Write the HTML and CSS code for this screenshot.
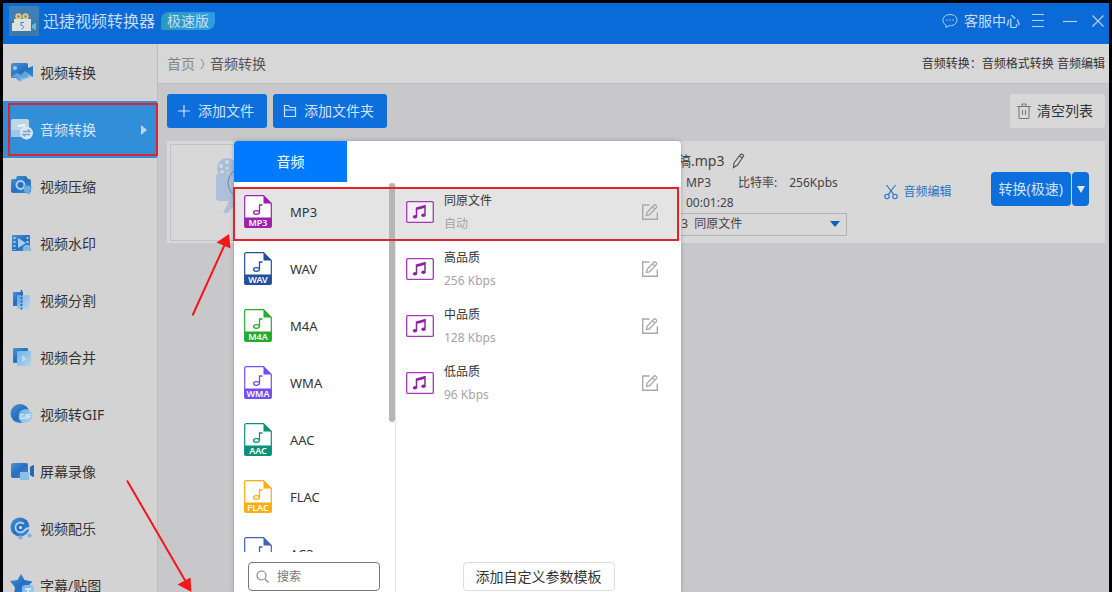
FILE: index.html
```html
<!DOCTYPE html>
<html lang="zh-CN">
<head>
<meta charset="utf-8">
<title>迅捷视频转换器</title>
<link rel="stylesheet" href="styles.css">
</head>
<body>
<svg class="defs" aria-hidden="true">
  <defs>
    <linearGradient id="deep" x1="0" y1="0" x2="1" y2="1"><stop offset="0" stop-color="#4a92d6"/><stop offset=".5" stop-color="#256fc0"/><stop offset="1" stop-color="#3d92dc"/></linearGradient>
    <linearGradient id="pale" x1="0" y1="0" x2="1" y2="1"><stop offset="0" stop-color="#6fb2e6"/><stop offset="1" stop-color="#b4d3ea"/></linearGradient>
    <symbol id="file" viewBox="0 0 28 33">
      <path d="M2 .7h17.500l7.800 7.800V31a1.300 1.300 0 0 1-1.300 1.300H2A1.300 1.300 0 0 1 .7 31V2A1.300 1.300 0 0 1 2 .7z" fill="#fff" stroke="currentColor" stroke-width="1.200"/>
      <path d="M19.500.5l8 8h-8zM.5 22.500h27V31a1.500 1.500 0 0 1-1.500 1.500H2A1.500 1.500 0 0 1 .5 31z" fill="currentColor"/>
      <path d="M18.500 10h-3v7c0 1.500-1.600 2.300-3.300 2.300s-2.600-.7-2.600-1.700 1.200-1.900 3-1.900c1.300 0 2.900.5 2.900 1.500" fill="none" stroke="currentColor" stroke-width="1.300"/>
    </symbol>
    <symbol id="music" viewBox="0 0 28 22">
      <rect x=".7" y=".7" width="26.600" height="20.600" rx="1" fill="#fff" fill-opacity=".5" stroke="#a33ab3" stroke-width="1.300"/>
      <path d="M10.500 15.500V7l8.500-2.200v8.800M10.500 8.300L19 6.100" fill="none" stroke="#9220a5" stroke-width="1.500"/>
      <ellipse cx="9" cy="15.800" rx="2.200" ry="1.800" fill="#9220a5"/><ellipse cx="17.500" cy="14.300" rx="2.200" ry="1.800" fill="#9220a5"/>
    </symbol>
    <symbol id="edit" viewBox="0 0 18 18">
      <path d="M8.500 2H1.700v14.300h14.600V9.500" fill="none" stroke="#a9a9a9" stroke-width="1.400"/>
      <path d="M6 9.500L13 2c1-.9 3.500 1.300 2.600 2.400l-7.200 7.400-3 .6zM11.500 3.800l2.400 2.300" fill="none" stroke="#a9a9a9" stroke-width="1.300"/>
    </symbol>
  </defs>
</svg>

<div class="window">
  <header class="titlebar">
    <svg class="logo" viewBox="0 0 30 30">
      <rect width="30" height="30" rx="1" fill="#3f80b4"/><path d="M0 15h30v15H0z" fill="#39709c" opacity=".5"/>
      <circle cx="9.500" cy="10.500" r="3.200" fill="#d9c69a"/><circle cx="9.500" cy="10.500" r="1.300" fill="#b8801f"/>
      <circle cx="16.500" cy="10.500" r="3.200" fill="#d9c69a"/><circle cx="16.500" cy="10.500" r="1.300" fill="#b8801f"/>
      <path d="M5 13h17v12H3v-8h2z" fill="#dde1e3"/><path d="M23 19l4-2.500v8L23 22z" fill="#5bc1cf"/>
      <path d="M15 16.500h-3v3c3-.5 3.500 3 .5 3.500" fill="none" stroke="#5285ad" stroke-width="1"/>
    </svg>
    <h1 class="title">迅捷视频转换器</h1>
    <span class="edition">极速版</span>
    <div class="window-tools">
      <a class="support" href="#support">
        <svg width="16" height="16" viewBox="0 0 16 16" fill="none" stroke="#b5cfe9" stroke-width="1"><path d="M4 14.500v-2.400C-1.500 9 .5 1.500 8 1.500s9 7 4.500 10c-2 1.300-4 1.400-5.500 1.200z"/><path d="M4.500 7h1M7.500 7h1M10.500 7h1" stroke-width="1.400"/></svg>
        客服中心
      </a>
      <button class="tool" aria-label="菜单"><svg width="14" height="14" viewBox="0 0 14 14"><path d="M1 .5h12M1 6.500h12M1 12.500h12"/></svg></button>
      <button class="tool" aria-label="最小化"><svg width="14" height="14" viewBox="0 0 14 14"><path d="M0 7.500h14"/></svg></button>
      <button class="tool close" aria-label="关闭"><svg width="14" height="14" viewBox="0 0 14 14"><path d="M1.500 1.500l11 11M12.500 1.500l-11 11"/></svg></button>
    </div>
  </header>

  <div class="layout">
    <nav class="sidebar">
      <a class="nav-item" href="#convert"><svg class="nav-icon" viewBox="0 0 24 24"><path d="M1 4q0-2 2-2h13q2 0 2 2v3l5-2v11l-5-2v2q0 1-2 1h-4l-3 3-3-3H2q-1 0-1-2z" fill="url(#deep)"/><circle cx="5" cy="7" r="2" fill="#9cc8ea"/><path d="M1 16l6-4 4 2 4-4 7 5-9 4-3 2-3-4z" fill="#7bb8e8" opacity=".7"/></svg>视频转换</a>
      <a class="nav-item active" href="#audio"><svg class="nav-icon" viewBox="0 0 24 24"><path d="M1 3q0-2 2-2h14q2 0 2 2v16H1z" fill="#bfd6e8"/><path d="M1 12h9v7H1z" fill="#9fc6e4"/><path d="M8 8l6-1v4" fill="none" stroke="#fff" stroke-width="1.500"/><circle cx="16.500" cy="15" r="6.500" fill="#dde3e8"/><path d="M13 13.500h7l-2-2M20 16.500h-7l2 2" fill="none" stroke="#69a9da" stroke-width="1.300"/></svg>音频转换<span class="caret"></span></a>
      <a class="nav-item" href="#compress"><svg class="nav-icon" viewBox="0 0 24 24"><path d="M1 6q0-2 2-2h3l1-3h9l2 3h1q2 0 2 2v10q0 2-2 2H3q-2 0-2-2z" fill="url(#deep)"/><circle cx="10.500" cy="10" r="4" fill="none" stroke="#a8d0ee" stroke-width="2"/><path d="M14 10l9 2-3 3-1 5-5-4z" fill="#6badde"/></svg>视频压缩</a>
      <a class="nav-item" href="#watermark"><svg class="nav-icon" viewBox="0 0 24 24"><rect x="2" y="3" width="18" height="16" rx="1" fill="url(#deep)"/><path d="M4.500 5v13M17.500 5v9" stroke="#a7cdeb" stroke-width="2" stroke-dasharray="2 2"/><path d="M8 6l8 5-8 5z" fill="#a7cdeb"/><path d="M13 17q0-4 4-4t4 4v2h-8z" fill="#87b9df"/></svg>视频水印</a>
      <a class="nav-item" href="#split"><svg class="nav-icon" viewBox="0 0 24 24"><path d="M3 3h10v14H3z" fill="url(#deep)"/><path d="M7 6h13v14H7z" fill="url(#pale)" opacity=".8"/><path d="M11.500 1v20" stroke="#1d5fa8" stroke-width="1.500" stroke-dasharray="2 1.500"/></svg>视频分割</a>
      <a class="nav-item" href="#merge"><svg class="nav-icon" viewBox="0 0 24 24"><rect x="3" y="2" width="15" height="15" rx="1" fill="url(#deep)"/><rect x="7" y="5" width="14" height="15" rx="1" fill="url(#pale)"/><path d="M12 9l5 3.500-5 3.500z" fill="#b9dbf4"/></svg>视频合并</a>
      <a class="nav-item" href="#gif"><svg class="nav-icon" viewBox="0 0 24 24"><circle cx="10" cy="10.500" r="9.500" fill="url(#deep)"/><circle cx="15.500" cy="13" r="7" fill="url(#pale)"/><path d="M14 11.500h-3v4h3v-2M16 11v5M18 16v-4.500h3M18 13.500h2.500" fill="none" stroke="#dcebf6" stroke-width="1.200"/></svg>视频转GIF</a>
      <a class="nav-item" href="#record"><svg class="nav-icon" viewBox="0 0 24 24"><rect x="1" y="3" width="17" height="15" rx="2" fill="url(#deep)"/><path d="M20 7l3-2q1 0 1 1v10q0 1-1 1l-3-2z" fill="#2168b5"/><path d="M10 12h9v8h-9z" fill="#8dbfe6"/></svg>屏幕录像</a>
      <a class="nav-item" href="#music-track"><svg class="nav-icon" viewBox="0 0 24 24"><circle cx="10" cy="10" r="9.500" fill="url(#deep)"/><path d="M14 7a5 5 0 1 0 0 7q2-3 6-3" fill="none" stroke="#aed3ef" stroke-width="1.800"/><circle cx="10.500" cy="10.500" r="1.500" fill="#d5e9f6"/><path d="M8 20l3-2 2 3-3 2zM17 18l3-2 2 3-3 2z" fill="#7db2dc"/></svg>视频配乐</a>
      <a class="nav-item" href="#subtitle"><svg class="nav-icon" viewBox="0 0 24 24"><path d="M11 0l3.500 6 8 1.500-5.500 6 1 8-7-3.500L4 21.500l1-8L0 7l7.500-1z" fill="url(#deep)"/><rect x="12" y="11" width="12" height="11" rx="3" fill="url(#pale)"/><path d="M15 15h6M18 15v5" stroke="#e3eff8" stroke-width="1.500"/></svg>字幕/贴图</a>
    </nav>

    <main class="main">
      <div class="crumb-bar">
        <div class="crumbs"><a href="#home" class="crumb-home">首页</a><svg width="5" height="12" viewBox="0 0 5 12"><path d="M1 1q2 3 3 5-1 2-3 5" fill="none" stroke="#888"/></svg><span>音频转换</span></div>
        <div class="quick">音频转换：<a href="#format">音频格式转换</a> <a href="#audio-edit">音频编辑</a></div>
      </div>

      <div class="toolbar">
        <button class="primary"><svg width="14" height="14" viewBox="0 0 14 14"><path d="M7 1v12M1 7h12"/></svg>添加文件</button>
        <button class="primary"><svg width="14" height="14" viewBox="0 0 14 14"><path d="M1.500 12.500v-11h4l1.500 2h5.500v9zM1.500 6h11"/></svg>添加文件夹</button>
        <button class="clear"><svg width="14" height="16" viewBox="0 0 14 16" fill="none" stroke="#777"><path d="M0 3.500h14M2 3.500v12h10v-12M5 3.500V1h4v2.500M5.500 7v5M8.500 7v5"/></svg>清空列表</button>
      </div>

      <section class="file-card">
        <div class="thumb">
          <svg width="62" height="68" viewBox="0 0 62 68"><circle cx="11" cy="10" r="10" fill="#a9bdd8"/><g fill="#d8d8d8"><circle cx="11" cy="4" r="2"/><circle cx="5" cy="8" r="2"/><circle cx="6" cy="14" r="2"/><circle cx="12" cy="16" r="2"/><circle cx="11" cy="10" r="1.500"/></g><rect y="15" width="42" height="28" rx="4" fill="#aebfda"/><path d="M13 43L7 55h5l9-12z" fill="#aebfda"/><circle cx="27" cy="25" r="15" fill="none" stroke="#6f83a3"/></svg>
        </div>
        <div class="info">
          <div class="name">稿.mp3 <svg width="13" height="16" viewBox="0 0 13 16" fill="none" stroke="#555" stroke-width="1.200"><path d="M2 10L8.500 1.500q2-1 3.200 1.300L5.500 12 1.500 14.500zM7.500 3l3 2"/></svg></div>
          <div class="meta"><span>MP3</span><span class="bitrate"><span>比特率:</span><span>256Kpbs</span></span></div>
          <div class="duration">00:01:28</div>
          <div class="format-wrap"><select class="format" aria-label="输出格式"><option>MP3&nbsp; 同原文件</option></select></div>
        </div>
        <a class="audio-edit" href="#cut"><svg width="14" height="16" viewBox="0 0 14 16" fill="none" stroke="#2674c6" stroke-width="1.100"><circle cx="3" cy="12.500" r="2.200"/><circle cx="11" cy="12.500" r="2.200"/><path d="M4.200 10.700L11.500 1M9.800 10.700L2.500 1"/></svg>音频编辑</a>
        <div class="convert"><button class="go">转换(极速)</button><button class="more" aria-label="更多选项"><span class="down"></span></button></div>
      </section>
    </main>
  </div>
</div>

<div class="popup">
  <div class="tabs"><button class="tab">音频</button></div>
  <div class="popup-body">
    <div class="formats">
      <ul class="format-list">
        <li class="fmt selected"><span class="fmt-icon mp3"><svg><use href="#file"/></svg><b>MP3</b></span>MP3</li>
        <li class="fmt"><span class="fmt-icon wav"><svg><use href="#file"/></svg><b>WAV</b></span>WAV</li>
        <li class="fmt"><span class="fmt-icon m4a"><svg><use href="#file"/></svg><b>M4A</b></span>M4A</li>
        <li class="fmt"><span class="fmt-icon wma"><svg><use href="#file"/></svg><b>WMA</b></span>WMA</li>
        <li class="fmt"><span class="fmt-icon aac"><svg><use href="#file"/></svg><b>AAC</b></span>AAC</li>
        <li class="fmt"><span class="fmt-icon flac"><svg><use href="#file"/></svg><b>FLAC</b></span>FLAC</li>
        <li class="fmt"><span class="fmt-icon ac3"><svg><use href="#file"/></svg></span>AC3</li>
      </ul>
      <label class="search"><svg width="13" height="13" viewBox="0 0 13 13" fill="none" stroke="#888" stroke-width="1.200"><circle cx="5.500" cy="5.500" r="4.500"/><path d="M9 9l3.500 3.500"/></svg><input type="text" placeholder="搜索" aria-label="搜索"></label>
      <span class="thumb-bar"></span>
    </div>
    <div class="presets">
      <ul class="preset-list">
        <li class="preset selected"><svg class="music"><use href="#music"/></svg><div class="preset-text"><div>同原文件</div><div class="rate">自动</div></div><button class="edit" aria-label="编辑"><svg><use href="#edit"/></svg></button></li>
        <li class="preset"><svg class="music"><use href="#music"/></svg><div class="preset-text"><div>高品质</div><div class="rate">256 Kbps</div></div><button class="edit" aria-label="编辑"><svg><use href="#edit"/></svg></button></li>
        <li class="preset"><svg class="music"><use href="#music"/></svg><div class="preset-text"><div>中品质</div><div class="rate">128 Kbps</div></div><button class="edit" aria-label="编辑"><svg><use href="#edit"/></svg></button></li>
        <li class="preset"><svg class="music"><use href="#music"/></svg><div class="preset-text"><div>低品质</div><div class="rate">96 Kbps</div></div><button class="edit" aria-label="编辑"><svg><use href="#edit"/></svg></button></li>
      </ul>
      <button class="custom">添加自定义参数模板</button>
    </div>
  </div>
</div>

<div class="mark mark-nav"></div>
<div class="mark mark-row"></div>
<svg class="arrows" width="240" height="592" viewBox="0 0 240 592"><path d="M192.500 315.500L225 244M127 480.500L186 582" stroke="#f3171c" stroke-width="2" fill="none"/><path d="M229 234l1.500 14.500-14-6zM191.500 592l-14-7.500 13-7z" fill="#f3171c"/></svg>
</body>
</html>
```
FILE: styles.css
```css
* { box-sizing: border-box; }
html, body { height: 100%; }
body {
  margin: 0;
  padding: 3px 3px 0;
  overflow: hidden;
  position: relative;
  background: #000;
  color: #333;
  font: 14px/20px "Noto Sans", "Noto Sans CJK SC", sans-serif;
}
a { color: inherit; text-decoration: none; }
button, input, select { font: inherit; color: inherit; margin: 0; padding: 0; }
button { border: 0; background: none; }
ul { margin: 0; padding: 0; list-style: none; }
svg { display: block; flex: none; }
.defs { position: absolute; width: 0; height: 0; }

.window { display: flex; flex-direction: column; height: 100%; }
.titlebar {
  display: flex;
  align-items: center;
  flex: none;
  height: 41px;
  padding: 0 4px 5px 6px;
  background: #0a6bd8;
  color: #c6dcf2;
}
.logo { width: 30px; height: 30px; }
.title { margin: 0 6px 0 4px; font-size: 16px; font-weight: 400; }
.edition {
  padding: 0 6px;
  line-height: 18px;
  border-radius: 8px 2px 8px 2px;
  background: linear-gradient(90deg, #289bbf, #2c9de0);
}
.window-tools { display: flex; align-items: center; gap: 18px; margin-left: auto; }
.support { display: flex; align-items: center; gap: 6px; margin-right: -7px; }
.tool svg { fill: none; stroke: #b5cfe9; stroke-width: 1.2; }
.close { margin-left: -4px; }

.layout { display: flex; flex: 1; min-height: 0; }
.sidebar {
  flex: none;
  width: 155px;
  overflow: hidden;
  background: #d3d3d3;
  border-right: 1px solid #bcbcbc;
}
.nav-item {
  display: flex;
  align-items: center;
  gap: 6px;
  height: 57px;
  padding: 0 10px 0 7px;
}
.nav-icon { width: 24px; height: 24px; }
.nav-item.active { background: #318fd9; color: #d4e6f5; }
.caret {
  margin-left: auto;
  border: solid transparent;
  border-width: 5px 0 5px 6px;
  border-left-color: #c0d6e8;
}

.main { flex: 1; min-width: 0; background: #c8c8ca; }
.crumb-bar {
  display: flex;
  align-items: center;
  justify-content: space-between;
  height: 40px;
  padding: 0 4px 0 9px;
  background: #d7d7d7;
  border-bottom: 1px solid #bfbfbf;
}
.crumbs { display: flex; align-items: center; gap: 5px; color: #555; }
.crumb-home { color: #858585; }
.quick { font-size: 12px; }
.toolbar { display: flex; gap: 6px; padding: 10px 4px 13px 9px; }
.primary {
  display: flex;
  align-items: center;
  gap: 7px;
  height: 34px;
  padding: 0 13px 0 10px;
  border-radius: 3px;
  background: #0c6fdc;
  color: #d2e3f5;
}
.primary svg { fill: none; stroke: #d2e3f5; stroke-width: 1.2; }
.clear {
  display: flex;
  align-items: center;
  gap: 6px;
  height: 34px;
  margin-left: auto;
  padding: 0 12px 0 7px;
  border-radius: 3px;
  background: #d8d8d8;
}
.file-card {
  display: flex;
  align-items: center;
  height: 102px;
  margin: 0 4px 0 9px;
  padding: 0 16px 0 3px;
  background: #d8d8d8;
  color: #444;
}
.thumb {
  display: flex;
  align-items: center;
  justify-content: center;
  width: 154px;
  height: 97px;
  border: 1px solid #c2c2c2;
}
.info { width: 193px; margin-left: 330px; font-size: 12px; }
.name { display: flex; align-items: center; gap: 8px; padding-left: 23px; font-size: 14px; line-height: 24px; }
.meta { display: flex; gap: 27px; padding-left: 32px; }
.bitrate { display: flex; gap: 12px; }
.duration { padding-left: 32px; line-height: 20px; }
.format-wrap { position: relative; }
.format-wrap::after {
  content: "";
  position: absolute;
  top: 8px;
  right: 7px;
  border: solid transparent;
  border-width: 6px 5px 0;
  border-top-color: #0c62bd;
}
.format {
  display: block;
  width: 100%;
  height: 23px;
  padding-left: 8px;
  appearance: none;
  border: 1px solid #b3b3b3;
  border-radius: 0;
  background: #d8d8d8;
}
.audio-edit { display: flex; align-items: center; gap: 6px; margin-left: auto; color: #2674c6; font-size: 12px; }
.convert { display: flex; gap: 1px; margin: -6px 0 0 39px; color: #d2e3f5; }
.go, .more { height: 34px; border-radius: 4px; background: #0c6fdc; }
.go { padding: 0 8px; }
.more { display: grid; place-items: center; width: 17px; }
.down { border: solid transparent; border-width: 7px 4px 0; border-top-color: #dce8f5; }

.popup {
  position: absolute;
  top: 141px;
  left: 234px;
  bottom: 0;
  width: 447px;
  display: flex;
  flex-direction: column;
  border-radius: 4px 4px 0 0;
  background: #fff;
  box-shadow: 0 0 4px rgba(0, 0, 0, .25);
}
.tabs { flex: none; height: 42px; }
.tab { width: 113px; height: 41px; border-radius: 4px 0 0; background: #007aff; color: #fff; }
.popup-body { display: flex; flex: 1; min-height: 0; }
.formats {
  position: relative;
  display: flex;
  flex-direction: column;
  flex: none;
  width: 162px;
  border-right: 1px solid #e4e4e4;
}
.format-list { flex: 1; min-height: 0; overflow: hidden; }
.fmt { display: flex; align-items: center; gap: 18px; height: 57px; padding-left: 10px; font-size: 13px; }
.fmt-icon { position: relative; width: 28px; height: 33px; }
.fmt-icon svg { width: 28px; height: 33px; }
.fmt-icon b {
  position: absolute;
  left: 0;
  right: 0;
  bottom: 0;
  color: #fff;
  font-size: 9px;
  font-weight: 600;
  line-height: 10px;
  text-align: center;
}
.selected { background: #e4e4e4; box-shadow: inset 0 4px #fff; }
.mp3 { color: #9a22ad; }
.wav { color: #23509c; }
.m4a { color: #25ab2d; }
.wma { color: #7150f2; }
.aac { color: #0b927b; }
.flac { color: #fcae0c; }
.ac3 { color: #4661b4; }
.thumb-bar { position: absolute; top: 0; right: 0; width: 6px; height: 239px; border-radius: 3px; background: #b5b5b5; }
.search {
  display: flex;
  align-items: center;
  flex: none;
  gap: 8px;
  height: 29px;
  margin: 10px 15px 1px 14px;
  padding: 0 7px;
  border: 1px solid #777;
  border-radius: 4px;
  font-size: 12px;
}
.search input { width: 100%; min-width: 0; border: 0; outline: 0; background: none; }
.search input::placeholder { color: #777; opacity: 1; }
.presets { display: flex; flex-direction: column; flex: 1; }
.preset { display: flex; align-items: center; gap: 10px; height: 57px; padding: 0 22px 0 10px; font-size: 12px; }
.music { width: 28px; height: 22px; }
.preset-text { line-height: 23px; }
.rate { color: #a5a5a5; }
.edit { margin-left: auto; }
.edit svg { width: 18px; height: 18px; }
.custom {
  align-self: center;
  height: 29px;
  margin: auto 0 1px;
  padding: 0 12px;
  border: 1px solid #ddd;
  border-radius: 4px;
}

.mark { position: absolute; border: 2px solid #e3222b; pointer-events: none; }
.mark-nav { top: 103px; left: 8px; width: 150px; height: 53px; }
.mark-row { top: 187px; left: 233px; width: 446px; height: 54px; }
.arrows { position: absolute; top: 0; left: 0; pointer-events: none; }
```
